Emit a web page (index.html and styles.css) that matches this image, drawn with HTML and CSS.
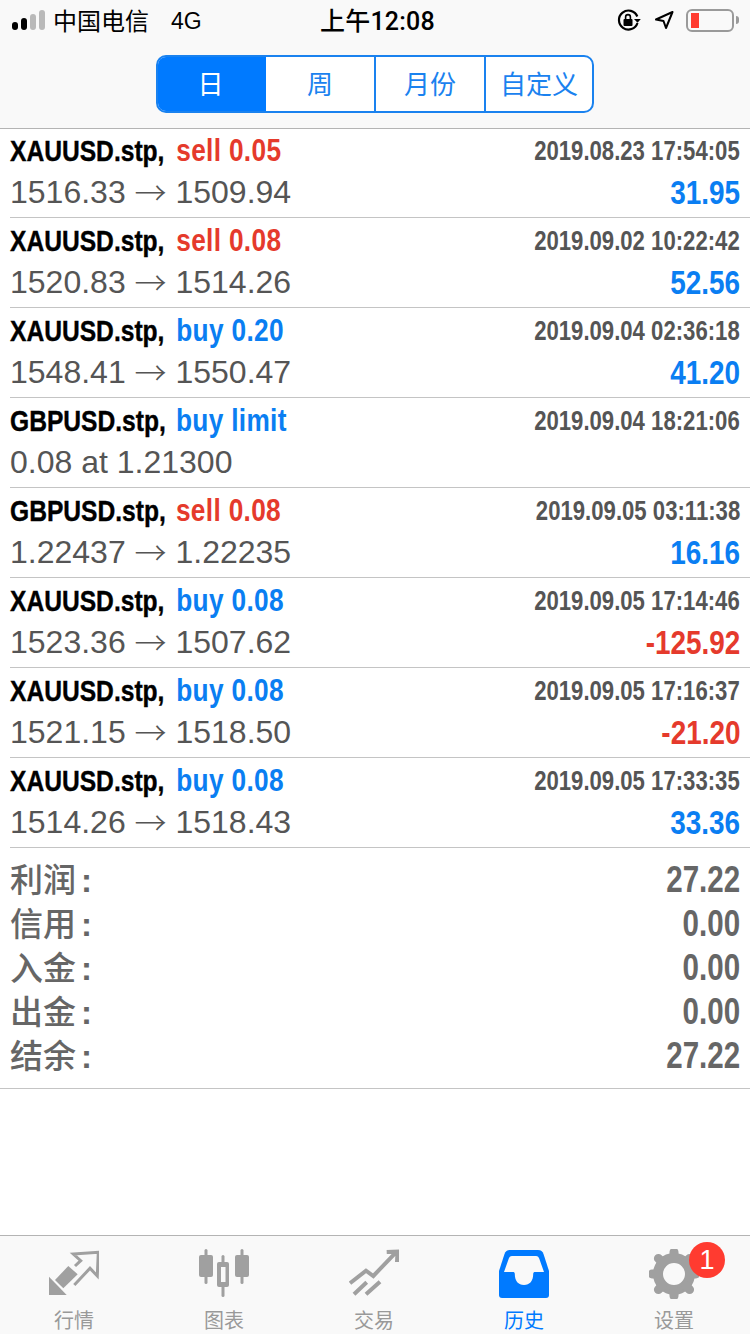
FILE: index.html
```html
<!DOCTYPE html>
<html lang="zh">
<head>
<meta charset="utf-8">
<title>历史</title>
<link rel="stylesheet" href="styles.css">
</head>
<body>
<div class="phone">
  <header class="top">
    <div class="status">
      <div class="status-left">
        <span class="signal"><i class="b1"></i><i class="b2"></i><i class="b3 off"></i><i class="b4 off"></i></span>
        <span class="carrier">中国电信</span>
        <span class="net">4G</span>
      </div>
      <div class="clock">上午12:08</div>
      <div class="status-right">
        <svg class="ico-lock" viewBox="0 0 24 24" width="24" height="24"><path d="M20.300 8.500A9.500 9.500 0 1 0 20.500 15" fill="none" stroke="#000" stroke-width="2.200"/><path d="M17 11h6.800l-3.300 3.800z" fill="#000"/><rect x="6.500" y="11" width="9" height="7" rx="1" fill="#000"/><path d="M8.600 11V9a2.400 2.400 0 0 1 4.800 0v2" fill="none" stroke="#000" stroke-width="1.600"/></svg>
        <svg class="ico-loc" viewBox="0 0 20 20" width="20" height="20"><path d="M18.500 2 2 9.500l7.500 1.500L12 18z" fill="none" stroke="#000" stroke-width="2" stroke-linejoin="round"/></svg>
        <span class="battery"><span class="battery-level"></span></span><span class="battery-cap"></span>
      </div>
    </div>
    <nav class="seg">
      <span class="seg-item on">日</span>
      <span class="seg-item">周</span>
      <span class="seg-item">月份</span>
      <span class="seg-item">自定义</span>
    </nav>
  </header>

  <main class="list">
    <section class="row">
      <div class="line top-line"><div class="sq-l"><b class="sym">XAUUSD.stp,</b> <b class="act red">sell 0.05</b></div><div class="sq-r time">2019.08.23 17:54:05</div></div>
      <div class="line price-line"><div class="price">1516.33 <span class="arr">→</span> 1509.94</div><div class="sq-r amt blue">31.95</div></div>
    </section>
    <section class="row">
      <div class="line top-line"><div class="sq-l"><b class="sym">XAUUSD.stp,</b> <b class="act red">sell 0.08</b></div><div class="sq-r time">2019.09.02 10:22:42</div></div>
      <div class="line price-line"><div class="price">1520.83 <span class="arr">→</span> 1514.26</div><div class="sq-r amt blue">52.56</div></div>
    </section>
    <section class="row">
      <div class="line top-line"><div class="sq-l"><b class="sym">XAUUSD.stp,</b> <b class="act blue">buy 0.20</b></div><div class="sq-r time">2019.09.04 02:36:18</div></div>
      <div class="line price-line"><div class="price">1548.41 <span class="arr">→</span> 1550.47</div><div class="sq-r amt blue">41.20</div></div>
    </section>
    <section class="row">
      <div class="line top-line"><div class="sq-l"><b class="sym">GBPUSD.stp,</b> <b class="act act-tight blue">buy limit</b></div><div class="sq-r time">2019.09.04 18:21:06</div></div>
      <div class="line price-line"><div class="price">0.08 at 1.21300</div></div>
    </section>
    <section class="row">
      <div class="line top-line"><div class="sq-l"><b class="sym">GBPUSD.stp,</b> <b class="act act-tight red">sell 0.08</b></div><div class="sq-r time">2019.09.05 03:11:38</div></div>
      <div class="line price-line"><div class="price">1.22437 <span class="arr">→</span> 1.22235</div><div class="sq-r amt blue">16.16</div></div>
    </section>
    <section class="row">
      <div class="line top-line"><div class="sq-l"><b class="sym">XAUUSD.stp,</b> <b class="act blue">buy 0.08</b></div><div class="sq-r time">2019.09.05 17:14:46</div></div>
      <div class="line price-line"><div class="price">1523.36 <span class="arr">→</span> 1507.62</div><div class="sq-r amt red">-125.92</div></div>
    </section>
    <section class="row">
      <div class="line top-line"><div class="sq-l"><b class="sym">XAUUSD.stp,</b> <b class="act blue">buy 0.08</b></div><div class="sq-r time">2019.09.05 17:16:37</div></div>
      <div class="line price-line"><div class="price">1521.15 <span class="arr">→</span> 1518.50</div><div class="sq-r amt red">-21.20</div></div>
    </section>
    <section class="row">
      <div class="line top-line"><div class="sq-l"><b class="sym">XAUUSD.stp,</b> <b class="act blue">buy 0.08</b></div><div class="sq-r time">2019.09.05 17:33:35</div></div>
      <div class="line price-line"><div class="price">1514.26 <span class="arr">→</span> 1518.43</div><div class="sq-r amt blue">33.36</div></div>
    </section>
  </main>

  <section class="summary">
    <div class="sum"><span class="sum-k">利润<span class="colon">:</span></span><span class="sq-r sum-v">27.22</span></div>
    <div class="sum"><span class="sum-k">信用<span class="colon">:</span></span><span class="sq-r sum-v">0.00</span></div>
    <div class="sum"><span class="sum-k">入金<span class="colon">:</span></span><span class="sq-r sum-v">0.00</span></div>
    <div class="sum"><span class="sum-k">出金<span class="colon">:</span></span><span class="sq-r sum-v">0.00</span></div>
    <div class="sum"><span class="sum-k">结余<span class="colon">:</span></span><span class="sq-r sum-v">27.22</span></div>
  </section>

  <div class="spacer"></div>

  <footer class="tabs">
    <div class="tab">
      <svg viewBox="0 0 50 50" width="50" height="50"><g fill="#a0a0a0"><path d="M0 27.700V46H17.700z"/><path d="M19.300 17 28.700 25.300 14.300 39.300 6 31z"/></g><path d="M26 17 31.700 11.700 24.300 5 49.300 3.300 48.300 27 41 19.300 25.300 36" fill="none" stroke="#a0a0a0" stroke-width="3"/></svg>
      <span>行情</span>
    </div>
    <div class="tab">
      <svg viewBox="0 0 50 50" width="50" height="50"><g fill="#a0a0a0"><rect x="0" y="6" width="14" height="22" rx="2"/><rect x="5.500" y="0" width="3" height="35" rx="1.500"/><rect x="36" y="6" width="14" height="22" rx="2"/><rect x="41.500" y="0" width="3" height="35" rx="1.500"/><rect x="22.500" y="6" width="3" height="42" rx="1.500"/><rect x="18" y="13" width="12" height="25" rx="2"/></g><rect x="22" y="18" width="4.500" height="15" fill="#f9f9f9"/></svg>
      <span>图表</span>
    </div>
    <div class="tab">
      <svg viewBox="0 0 50 50" width="50" height="50"><path d="M1 34.300 17 21.700 24.300 27 46 4.300M37.700 3 48.500 2.500 48 13M5 45.300 17.700 33.300M17 45.300 31 32.700" fill="none" stroke="#a0a0a0" stroke-width="4"/></svg>
      <span>交易</span>
    </div>
    <div class="tab active">
      <svg viewBox="0 -1 50 50" width="50" height="50"><path d="M11 0h28c3 0 4.500 1.500 5.500 4L50 21v24c0 2-1 3-3 3H3c-2 0-3-1-3-3V21L5.500 4C6.500 1.500 8 0 11 0z" fill="#007aff"/><path d="M13 6h24c2 0 2.500 1 3.200 2.500L45 22H36c-1 0-1.800.5-1.800 2 0 7-3.500 11-9.200 11s-9.200-4-9.200-11c0-1.500-.8-2-1.800-2H5L9.800 8.500C10.500 7 11 6 13 6z" fill="#f9f9f9"/></svg>
      <span>历史</span>
    </div>
    <div class="tab">
      <svg viewBox="0 1 50 50" width="50" height="50"><circle cx="25" cy="26" r="16" fill="none" stroke="#a0a0a0" stroke-width="10"/><path d="M25 4v6M25 42v6M3 26h6M41 26h6M9.400 10.400l4.200 4.200M36.400 37.400l4.200 4.200M40.600 10.400l-4.200 4.200M13.600 37.400l-4.200 4.200" stroke="#a0a0a0" stroke-width="9" stroke-linecap="round"/></svg>
      <span>设置</span>
      <em class="badge">1</em>
    </div>
  </footer>
</div>
</body>
</html>
```
FILE: styles.css
```css
* { box-sizing: border-box; }
html, body { margin: 0; padding: 0; }
body { background: #fff; font-family: "Liberation Sans", "Noto Sans CJK SC", sans-serif; }
.phone { width: 750px; height: 1334px; display: flex; flex-direction: column; overflow: hidden; }

.top { height: 129px; background: #f9f9f9; border-bottom: 1px solid #b4b4b4; padding-bottom: 15px; display: flex; flex-direction: column; }
.status { height: 40px; display: flex; align-items: center; justify-content: space-between; position: relative; color: #000; margin-bottom: 15px; }
.status-left { display: flex; align-items: center; padding-left: 12px; font-size: 24px; }
.signal { display: flex; align-items: flex-end; gap: 3px; width: 33px; height: 20px; }
.signal i { width: 6px; background: #000; border-radius: 3px; display: block; }
.signal .b1 { height: 8px; }
.signal .b2 { height: 12px; }
.signal .b3 { height: 16px; }
.signal .b4 { height: 20px; }
.signal .off { background: #b9b9b9; }
.carrier { margin-left: 8px; font-family: "Noto Sans CJK SC", sans-serif; font-size: 24px; line-height: 40px; }
.net { margin-left: 22px; font-size: 23px; padding-top: 2px; }
.clock { position: absolute; left: 320px; top: 0; line-height: 43px; font-size: 25px; letter-spacing: .2px; font-weight: 500; font-family: Roboto, "Noto Sans CJK SC", sans-serif; }
.status-right { display: flex; align-items: center; padding-right: 11px; }
.ico-lock { margin-right: 13px; }
.ico-loc { margin-right: 12px; }
.battery { width: 48px; height: 23px; border: 2px solid #9a9a9a; border-radius: 6px; padding: 2px 3px; display: block; }
.battery-level { display: block; width: 8px; height: 100%; background: #ff3b30; }
.battery-cap { width: 3px; height: 8px; background: #9a9a9a; border-radius: 0 3px 3px 0; margin-left: 2px; }

.seg { align-self: center; width: 438px; height: 58px; display: flex; border: 2px solid #1a82ef; border-radius: 10px; overflow: hidden; background: #fff; }
.seg-item { flex: none; width: 110px; padding-bottom: 3px; display: flex; align-items: center; justify-content: center; font-family: "Noto Sans CJK SC", sans-serif; font-size: 26px; color: #1a82ef; border-right: 2px solid #1a82ef; }
.seg-item:first-child { width: 108px; padding-right: 3px; border-right: 0; }
.seg-item:last-child { width: 106px; border-right: 0; }
.seg-item.on { background: #007aff; color: #fff; }

.list { display: block; }
.row { height: 90px; padding: 1px 10px 0; position: relative; display: flex; flex-direction: column; }
.row:first-child { height: 89px; padding-top: 0; }
.row::after { content: ""; position: absolute; left: 10px; right: 0; bottom: 0; height: 1px; background: #c4c4c4; }
.line { display: flex; justify-content: space-between; align-items: center; }
.top-line { height: 44px; }
.price-line { height: 38px; }
.sq-l { transform: scaleX(.82); transform-origin: left center; white-space: nowrap; font-size: 30px; color: #000; padding-bottom: 2px; }
.sq-r { transform: scaleX(.82); transform-origin: right center; white-space: nowrap; font-weight: bold; }
.sym { color: #000; -webkit-text-stroke: .4px #000; }
.act { font-size: 32px; letter-spacing: .4px; margin-left: 6px; }
.act-tight { margin-left: 4px; }
.red { color: #e53a2c; }
.blue { color: #0a7ef2; }
.time { font-size: 27px; color: #555; }
.amt { font-size: 34px; }
.price { font-size: 32px; line-height: 38px; color: #555; white-space: nowrap; }
.arr { font-family: "Noto Sans CJK SC", sans-serif; font-weight: 300; line-height: 30px; vertical-align: -2px; }

.summary { padding: 10px 10px 10px; border-bottom: 1px solid #c4c4c4; }
.sum { height: 44px; display: flex; justify-content: space-between; align-items: center; color: #666; }
.sum-k { font-family: "Noto Sans CJK SC", sans-serif; font-size: 33px; font-weight: 500; line-height: 44px; padding-bottom: 2px; }
.colon { font-family: "Liberation Sans", sans-serif; font-weight: bold; margin-left: 5px; }
.sum-v { font-size: 36px; color: #666; }

.spacer { flex: 1; }

.tabs { height: 99px; background: #f9f9f9; border-top: 1px solid #b4b4b4; display: flex; }
.tab { flex: 1; position: relative; display: flex; flex-direction: column; align-items: center; padding: 13px 2px 0 0; color: #999; font-family: "Noto Sans CJK SC", sans-serif; font-size: 20px; }
.tab svg { flex: none; }
.tab span { line-height: 28px; margin-top: 7px; }
.tab.active { color: #007aff; }
.badge { position: absolute; left: 89px; top: 6px; width: 36px; height: 36px; border-radius: 50%; background: #ff3b30; color: #fff; font-style: normal; font-family: "Liberation Sans", sans-serif; font-size: 27px; line-height: 36px; text-align: center; }
```
